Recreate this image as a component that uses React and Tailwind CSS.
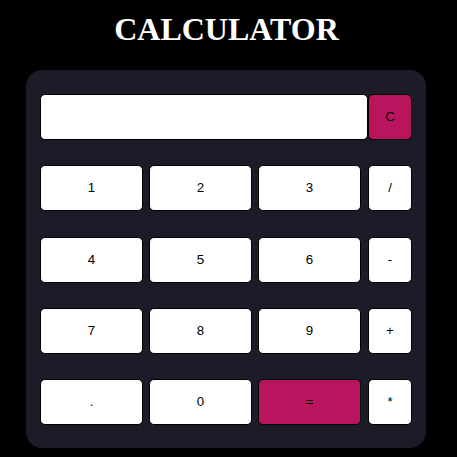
import React from 'react';

const rows = [
  ['1', '2', '3', '/'],
  ['4', '5', '6', '-'],
  ['7', '8', '9', '+'],
  ['.', '0', '=', '*'],
];

const Key = ({ label, wide }) => {
  const pink = label === '=';
  return (
    <button
      className={
        (wide ? 'w-[103px] ' : 'w-[44px] ') +
        (pink ? 'bg-[#b9145e] ' : 'bg-white ') +
        'h-[46px] rounded-[5px] border border-black text-[13.33px] text-black'
      }
      style={{ fontFamily: '"Liberation Sans", Arial, sans-serif' }}
    >
      {label}
    </button>
  );
};

export default function App() {
  return (
    <div className="min-h-[457px] bg-black pb-[8px]">
      <h1
        className="pt-[13px] text-center text-[32px] leading-[32px] font-bold text-white ml-[-4px]"
        style={{ fontFamily: '"Liberation Serif", "Times New Roman", serif' }}
      >
        CALCULATOR
      </h1>
      <div className="mt-[25px] ml-[26px] w-[400px] rounded-[16px] bg-[#1b1c28] px-[14px] pt-[24px] pb-[23px]">
        <div className="flex flex-col gap-[25.25px]">
          <div className="flex">
            <div className="h-[46px] w-[328px] rounded-[5px] border border-black bg-white" />
            <button
              className="h-[46px] w-[44px] rounded-[5px] border border-black bg-[#b9145e] text-[13.33px] text-black"
              style={{ fontFamily: '"Liberation Sans", Arial, sans-serif' }}
            >
              C
            </button>
          </div>
          {rows.map((row, i) => (
            <div key={i} className="flex">
              <Key label={row[0]} wide />
              <div className="w-[6px]" />
              <Key label={row[1]} wide />
              <div className="w-[6px]" />
              <Key label={row[2]} wide />
              <div className="w-[7px]" />
              <Key label={row[3]} />
            </div>
          ))}
        </div>
      </div>
    </div>
  );
}
